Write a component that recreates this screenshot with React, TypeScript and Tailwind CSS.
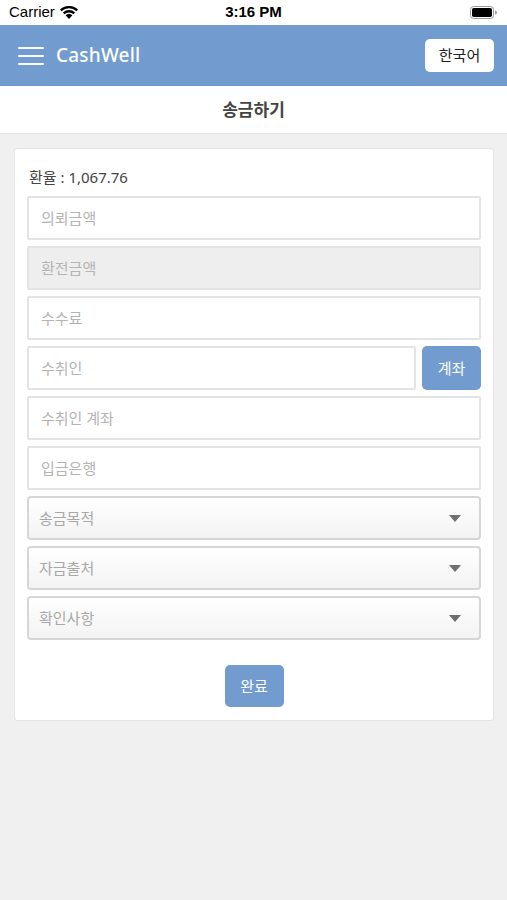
import React from 'react'

const font = { fontFamily: '"Noto Sans", "Noto Sans CJK KR", sans-serif' }

const Field = ({ label, disabled = false }: { label: string; disabled?: boolean }) => (
  <div
    className={`h-[44px] border-2 border-[#e4e4e4] rounded-[2px] flex items-center px-[12px] text-[15px] text-[#b4b4b4] ${disabled ? 'bg-[#eeeeee]' : 'bg-white'}`}
  >
    {label}
  </div>
)

const Select = ({ label }: { label: string }) => (
  <div className="h-[44px] border-2 border-[#d6d6d6] rounded-[4px] flex items-center justify-between pl-[10px] pr-[18px] text-[15px] text-[#a8a8a8] bg-gradient-to-b from-white to-[#f3f3f3]">
    <span>{label}</span>
    <svg width="12" height="7" viewBox="0 0 12 7">
      <path d="M0 0h12L6 7z" fill="#6f6f6f" />
    </svg>
  </div>
)

export default function App() {
  return (
    <div className="w-[507px] h-[900px] bg-[#f0f0f0] flex flex-col" style={font}>
      {/* status bar */}
      <div className="h-[25px] bg-white flex items-center justify-between px-[9px] text-[15px] text-black" style={{ fontFamily: '"Liberation Sans", Arial, sans-serif' }}>
        <div className="flex items-center gap-[5px] w-[120px]">
          <span>Carrier</span>
          <svg width="18" height="13" viewBox="0 0 18 13">
            <path d="M9 13 5.6 9.3a5 5 0 0 1 6.8 0z" fill="#000" />
            <path d="M2.9 6.5a8.8 8.8 0 0 1 12.2 0l-1.6 1.7a6.5 6.5 0 0 0-9 0z" fill="#000" />
            <path d="M0 3.6a13 13 0 0 1 18 0l-1.6 1.7a10.7 10.7 0 0 0-14.8 0z" fill="#000" />
          </svg>
        </div>
        <span className="font-bold">3:16 PM</span>
        <div className="w-[120px] flex justify-end pr-[1px]">
          <svg width="27" height="13" viewBox="0 0 27 13">
            <rect x="0.5" y="0.5" width="23" height="12" rx="3" fill="none" stroke="#999" />
            <rect x="2" y="2" width="20" height="9" rx="1.8" fill="#000" />
            <path d="M25 4.5v4a2 2 0 0 0 0-4z" fill="#999" />
          </svg>
        </div>
      </div>

      {/* header */}
      <div className="h-[61px] bg-[#729bcf] flex items-center justify-between pl-[18px] pr-[13px]">
        <div className="flex items-center gap-[12px]">
          <div className="flex flex-col gap-[6px] w-[26px]">
            <div className="h-[2px] bg-white rounded" />
            <div className="h-[2px] bg-white rounded" />
            <div className="h-[2px] bg-white rounded" />
          </div>
          <span className="text-white text-[19px] font-medium tracking-[0.2px]">CashWell</span>
        </div>
        <div className="w-[69px] h-[33px] bg-white rounded-[5px] flex items-center justify-center text-[15px] text-[#222]">
          한국어
        </div>
      </div>

      {/* title */}
      <div className="h-[48px] bg-white border-b border-[#e2e2e2] flex items-center justify-center text-[17px] font-semibold text-[#444]">
        송금하기
      </div>

      {/* card */}
      <div className="ml-[14px] w-[480px] mt-[14px] bg-white border border-[#e4e4e4] rounded-[3px] px-[12px] pt-[17px] pb-[13px]">
        <div className="text-[15px] text-[#444] mb-[8px] pl-[2px] leading-[22px]">환율 : 1,067.76</div>
        <div className="flex flex-col gap-[6px]">
          <Field label="의뢰금액" />
          <Field label="환전금액" disabled />
          <Field label="수수료" />
          <div className="flex gap-[6px]">
            <div className="flex-1">
              <Field label="수취인" />
            </div>
            <div className="w-[59px] h-[44px] bg-[#729bcf] rounded-[5px] flex items-center justify-center text-white text-[15px]">
              계좌
            </div>
          </div>
          <Field label="수취인 계좌" />
          <Field label="입금은행" />
          <Select label="송금목적" />
          <Select label="자금출처" />
          <Select label="확인사항" />
        </div>
        <div className="flex justify-center mt-[25px]">
          <div className="w-[59px] h-[42px] bg-[#729bcf] rounded-[5px] flex items-center justify-center text-white text-[15px]">
            완료
          </div>
        </div>
      </div>
    </div>
  )
}
